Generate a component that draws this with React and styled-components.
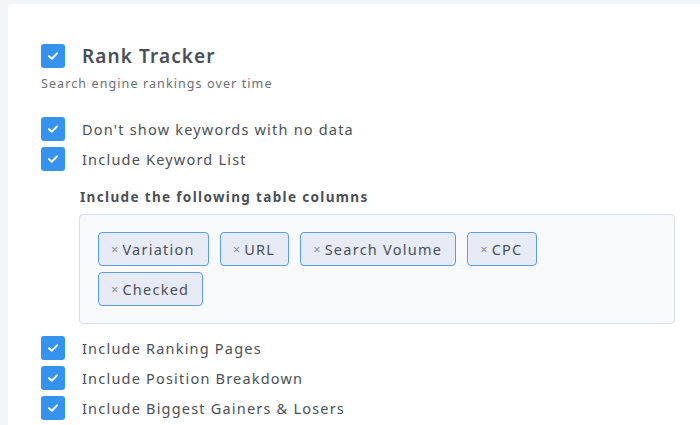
import styled, { createGlobalStyle } from 'styled-components';

const GlobalStyle = createGlobalStyle`
  html, body {
    margin: 0;
    padding: 0;
    background: #f4f5f7;
    font-family: 'Noto Sans', 'Open Sans', sans-serif;
    color: #4b4f58;
  }
`;

const Page = styled.div`
  padding: 4px 0 0 8px;
  height: 421px;
  overflow: hidden;
`;

const Card = styled.div`
  background: #ffffff;
  border-radius: 5px 0 0 0;
  padding: 40px 25px 0 33px;
  height: 100%;
  box-sizing: border-box;
`;

const TitleRow = styled.div`
  display: flex;
  align-items: center;
  gap: 17px;
  height: 24px;
`;

const Title = styled.h1`
  margin: 0;
  font-size: 19px;
  font-weight: 600;
  letter-spacing: 1.1px;
  color: #4a4e57;
`;

const Subtitle = styled.p`
  margin: 7px 0 0;
  font-size: 12.5px;
  line-height: 18px;
  letter-spacing: 1.1px;
  color: #6b6f78;
`;

const OptionList = styled.div`
  display: flex;
  flex-direction: column;
  gap: 6px;
  margin-top: ${(p) => p.$top}px;
`;

const Option = styled.label`
  display: flex;
  align-items: center;
  gap: 17px;
  height: 24px;
  font-size: 14.5px;
  letter-spacing: 1.2px;
  color: #4b4f58;
`;

const Box = styled.span`
  width: 24px;
  height: 24px;
  border-radius: 3px;
  background: #3593ee;
  display: flex;
  align-items: center;
  justify-content: center;
  flex-shrink: 0;
`;

const Columns = styled.div`
  margin: 16px 0 6px 38px;
`;

const ColumnsLabel = styled.div`
  font-size: 13.5px;
  line-height: 20px;
  font-weight: 700;
  letter-spacing: 1.35px;
  color: #4b4f58;
  margin-left: 1px;
`;

const TagBox = styled.div`
  margin-top: 7px;
  background: #f8f9fb;
  border: 1px solid #d9dde4;
  border-radius: 4px;
  padding: 17px 60px 17px 18px;
  display: flex;
  flex-wrap: wrap;
  gap: 6px 11px;
  min-height: 74px;
`;

const Tag = styled.span`
  display: inline-flex;
  align-items: center;
  gap: 4px;
  height: 34px;
  padding: 0 13px 0 12px;
  background: #e6ebf6;
  border: 1px solid #5c9de9;
  border-radius: 4px;
  box-sizing: border-box;
  font-size: 14.5px;
  letter-spacing: 1.25px;
  color: #4b4f58;
`;

const Remove = styled.span`
  font-size: 13px;
  color: #8d9097;
  letter-spacing: 0;
`;

const Check = () => (
  <Box>
    <svg width="12" height="10" viewBox="0 0 12 10">
      <path d="M2 5.2 L4.8 7.8 L10 2.4" fill="none" stroke="#fff" strokeWidth="2" strokeLinecap="round" strokeLinejoin="round" />
    </svg>
  </Box>
);

const columns = ['Variation', 'URL', 'Search Volume', 'CPC', 'Checked'];

export default function App() {
  return (
    <>
      <GlobalStyle />
      <Page>
        <Card>
          <TitleRow>
            <Check />
            <Title>Rank Tracker</Title>
          </TitleRow>
          <Subtitle>Search engine rankings over time</Subtitle>

          <OptionList $top={24}>
            <Option><Check />Don't show keywords with no data</Option>
            <Option><Check />Include Keyword List</Option>
          </OptionList>

          <Columns>
            <ColumnsLabel>Include the following table columns</ColumnsLabel>
            <TagBox>
              {columns.map((c) => (
                <Tag key={c}><Remove>×</Remove>{c}</Tag>
              ))}
            </TagBox>
          </Columns>

          <OptionList $top={12}>
            <Option><Check />Include Ranking Pages</Option>
            <Option><Check />Include Position Breakdown</Option>
            <Option><Check />Include Biggest Gainers &amp; Losers</Option>
          </OptionList>
        </Card>
      </Page>
    </>
  );
}
